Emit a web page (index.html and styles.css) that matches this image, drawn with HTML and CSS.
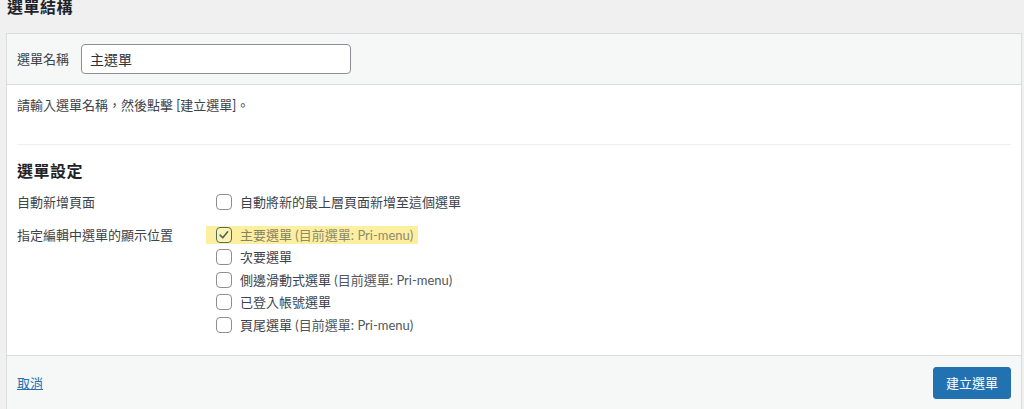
FILE: index.html
```html
<!DOCTYPE html>
<html lang="zh-Hant">

<head>
    <meta charset="UTF-8">
    <meta name="viewport" content="width=device-width, initial-scale=1.0">
    <title>選單結構</title>
    <link rel="stylesheet" href="styles.css">
</head>

<body>
    <h2 class="page-title">選單結構</h2>
    <div class="menu-box">
        <div class="menu-header">
            <label class="name-label" for="menu-name">選單名稱</label>
            <input class="name-input" id="menu-name" type="text" value="主選單">
        </div>

        <div class="menu-body">
            <p class="hint">請輸入選單名稱，然後點擊 [建立選單]。</p>
            <div class="divider"></div>

            <h3 class="settings-title">選單設定</h3>

            <div class="settings-group">
                <div class="group-name">自動新增頁面</div>
                <div class="group-input">
                    <label class="check-row">
                        <span class="box"></span>
                        <span>自動將新的最上層頁面新增至這個選單</span>
                    </label>
                </div>
            </div>

            <div class="settings-group second">
                <div class="group-name">指定編輯中選單的顯示位置</div>
                <div class="group-input">
                    <label class="check-row">
                        <span class="marked">
                            <span class="box checked">
                                <svg viewBox="0 0 16 16" width="14" height="14">
                                    <path d="M3.6 8.2 L6.6 11.2 L12.2 4.4" fill="none" stroke="currentColor" stroke-width="1.8" stroke-linecap="round" stroke-linejoin="round"/>
                                </svg>
                            </span>
                            <span>主要選單 <span class="state">(目前選單: Pri-menu)</span></span>
                        </span>
                    </label>
                    <label class="check-row">
                        <span class="box"></span>
                        <span>次要選單</span>
                    </label>
                    <label class="check-row">
                        <span class="box"></span>
                        <span>側邊滑動式選單 <span class="state">(目前選單: Pri-menu)</span></span>
                    </label>
                    <label class="check-row">
                        <span class="box"></span>
                        <span>已登入帳號選單</span>
                    </label>
                    <label class="check-row">
                        <span class="box"></span>
                        <span>頁尾選單 <span class="state">(目前選單: Pri-menu)</span></span>
                    </label>
                </div>
            </div>
        </div>

        <div class="menu-footer">
            <a class="cancel" href="#">取消</a>
            <button class="create">建立選單</button>
        </div>
    </div>
</body>

</html>
```

FILE: styles.css
```css
body {
    margin: 0;
    background-color: #f0f0f1;
    color: #3c434a;
    font-family: Lato, "Noto Sans CJK TC", sans-serif;
    font-size: 13px;
    line-height: 20px;
}

.page-title {
    margin: -3px 0 16px 7px;
    font-size: 16px;
    line-height: 20px;
    letter-spacing: 0.5px;
    font-weight: 700;
    color: #1d2327;
}

.menu-box {
    margin: 0 2px 0 6px;
    border: 1px solid #dcdcde;
    background-color: #fff;
}

.menu-header {
    display: flex;
    align-items: center;
    gap: 12px;
    padding: 10px 10px 10px;
    background-color: #f6f7f7;
    border-bottom: 1px solid #dcdcde;
}

.name-label {
    color: #3c434a;
}

.name-input {
    box-sizing: border-box;
    width: 270px;
    height: 30px;
    padding: 0 8px;
    border: 1px solid #8c8f94;
    border-radius: 4px;
    font-family: inherit;
    font-size: 14px;
    color: #2c3338;
    background-color: #fff;
}

.menu-body {
    padding: 10px 10px 19px;
}

.hint {
    margin: 0;
}

.divider {
    margin-top: 29px;
    border-top: 1px solid #f0f0f1;
}

.settings-title {
    margin: 16px 0 10px;
    font-size: 16px;
    line-height: 20px;
    letter-spacing: 0.5px;
    font-weight: 700;
    color: #1d2327;
}

.settings-group {
    display: grid;
    grid-template-columns: 199px 1fr;
}

.settings-group.second {
    margin-top: 11px;
}

.group-name {
    line-height: 22px;
}

.group-input {
    display: flex;
    flex-direction: column;
    row-gap: 0.4px;
}

.check-row {
    display: flex;
    align-items: center;
    gap: 8px;
    height: 22px;
}

.box {
    box-sizing: border-box;
    width: 16px;
    height: 16px;
    flex-shrink: 0;
    border: 1px solid #8c8f94;
    border-radius: 4px;
    background-color: #fff;
    display: flex;
    align-items: center;
    justify-content: center;
}

.state {
    color: #50575e;
}

.marked {
    display: inline-flex;
    align-items: center;
    gap: 8px;
    height: 18px;
    margin-left: -10px;
    padding: 0 5px 0 10px;
    background-color: #fcef9f;
    color: #878168;
}

.marked .state {
    color: #8f8a72;
}

.box.checked {
    border-color: #506e60;
    background-color: #fbf2b4;
    color: #48685a;
}

.menu-footer {
    display: flex;
    align-items: center;
    justify-content: space-between;
    padding: 11px 10px 20px;
    background-color: #f6f7f7;
    border-top: 1px solid #dcdcde;
}

.cancel {
    color: #2271b1;
    text-decoration: underline;
}

.create {
    height: 32px;
    padding: 0 12px;
    border: 1px solid #2271b1;
    border-radius: 3px;
    background-color: #2271b1;
    color: #fff;
    font-family: inherit;
    font-size: 13px;
    cursor: pointer;
}
```
